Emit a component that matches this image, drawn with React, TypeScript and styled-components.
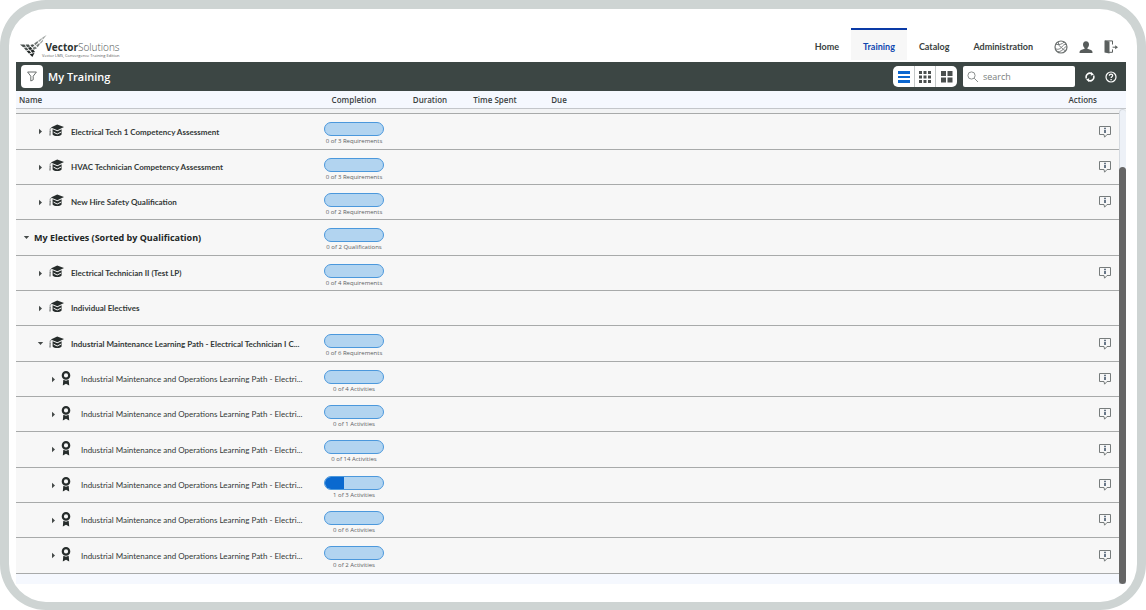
import React from "react";
import styled, { createGlobalStyle, css } from "styled-components";

const Global = createGlobalStyle`
  *, *::before, *::after { box-sizing: border-box; }
  body { margin: 0; background: #fff; color: #3a3f3e; font: 9px/12px "Open Sans", "Noto Sans", sans-serif; }
  button, input { font: inherit; color: inherit; margin: 0; padding: 0; border: 0; background: none; }
  button { cursor: pointer; }
  svg { display: block; flex-shrink: 0; }
`;

const Frame = styled.div`
  display: flex;
  flex-direction: column;
  min-height: 100vh;
  padding: 0 11px 0 7px;
  border: 9px solid #ced4d3;
  border-bottom-width: 8px;
  border-radius: 46px;
`;

const Header = styled.header`
  display: flex;
  justify-content: space-between;
  height: 53px;
  padding: 19px 8px 2px 4px;
`;

const Logo = styled.a`
  display: flex;
  align-items: flex-start;
  padding-top: 7px;
  color: #2c3331;
  text-decoration: none;
`;

const LogoText = styled.span`
  display: flex;
  flex-direction: column;
  align-items: flex-end;
  margin-left: -5px;
  padding-top: 5px;
`;

const Brand = styled.span`
  font: 700 10px/14px "Open Sans", sans-serif;
  span { font-weight: 300; color: #4c5250; }
`;

const Edition = styled.span`
  font-size: 4px;
  line-height: 4px;
  color: #555;
`;

const Nav = styled.nav`
  display: flex;
`;

const NavLink = styled.a<{ $active?: boolean }>`
  padding: 10px 12px 0;
  border-top: 2px solid transparent;
  font: 700 9px/14px Lato, "Open Sans", sans-serif;
  color: #3a3f3e;
  text-decoration: none;
  ${(p) => p.$active && css`
    border-top-color: #0a3aa6;
    background: #f7f7f7;
    color: #0f47b0;
  `}
`;

const NavIcons = styled.div`
  display: flex;
  gap: 11px;
  align-items: flex-start;
  padding: 12px 0 0 9px;
`;

const Toolbar = styled.div`
  display: flex;
  align-items: center;
  height: 29px;
  padding: 0 9px 0 5px;
  background: #3c4644;
`;

const FilterButton = styled.button`
  display: grid;
  place-items: center;
  width: 22px;
  height: 23px;
  border-radius: 4px;
  background: #fff;
`;

const Title = styled.h1`
  flex: 1;
  margin: 0 0 0 5px;
  font-size: 11px;
  line-height: 16px;
  font-weight: 600;
  color: #fff;
`;

const ViewSwitch = styled.div`
  display: flex;
  height: 21px;
  margin-right: 6px;
  border-radius: 5px;
  background: #fff;
`;

const ViewButton = styled.button`
  display: grid;
  place-items: center;
  width: 21px;
  color: #4a4f4e;
  & + & { border-left: 1px solid #c4c8c8; }
  &:last-child { width: 22px; }
  &[aria-pressed="true"] { color: #0b66cf; }
`;

const Search = styled.label`
  display: flex;
  align-items: center;
  gap: 4px;
  width: 112px;
  height: 21px;
  padding: 0 4px;
  border-radius: 2px;
  background: #fff;
  input { flex: 1; min-width: 0; outline: 0; }
  input::placeholder { color: #7b7f7e; opacity: 1; }
`;

const ToolButton = styled.button`
  display: grid;
  place-items: center;
  width: 12px;
  height: 20px;
  margin-left: 9px;
  color: #fff;
`;

const Panel = styled.main`
  position: relative;
  padding-bottom: 10px;
  background: #f5f8fe;
`;

const Table = styled.table`
  width: 100%;
  table-layout: fixed;
  border-collapse: separate;
  border-spacing: 0;
`;

const Head = styled.th<{ $w?: number; $align?: string }>`
  height: 18px;
  width: ${(p) => (p.$w ? p.$w + "px" : "auto")};
  padding: ${(p) => (p.$align === "right" ? "0 29px 0 0" : p.$align === "left" ? "0 3px" : "0")};
  border-bottom: 1px solid #c3c6ca;
  text-align: ${(p) => p.$align || "center"};
  font-size: 8px;
  line-height: 12px;
  font-weight: 600;
`;

const Lead = styled.td`
  height: 5px;
  padding: 0;
  background: #f2f3f4;
  border-bottom: 1px solid #a8aaaa;
`;

const Row = styled.tr`
  height: 35px;
  &:nth-child(3n + 2) { height: 36px; }
`;

const Cell = styled.td`
  padding: 0;
  background: #f7f7f7;
  border-bottom: 1px solid #a8aaaa;
`;

const nameFonts = [
  `700 9px/14px "Open Sans", sans-serif`,
  `700 8px/14px Lato, "Open Sans", sans-serif`,
  `400 8px/14px Lato, "Open Sans", sans-serif`,
];

const Name = styled.div<{ $level: number }>`
  display: flex;
  align-items: center;
  padding-left: ${(p) => [6, 20, 33][p.$level]}px;
  white-space: nowrap;
  font: ${(p) => nameFonts[p.$level]};
  color: ${(p) => (p.$level === 0 ? "#222726" : "#343938")};
`;

const Toggle = styled.button`
  display: grid;
  place-items: center;
  flex-shrink: 0;
  width: 8px;
  height: 12px;
  color: #454a49;
`;

const TypeIcon = styled.span<{ $level: number }>`
  flex-shrink: 0;
  width: ${(p) => (p.$level === 1 ? 15 : 10)}px;
  padding-bottom: 3px;
  margin: ${(p) => (p.$level === 1 ? "0 7px 0 5px" : "0 10px 0 4px")};
  color: #262c2b;
`;

const Label = styled.span<{ $level: number }>`
  padding-left: ${(p) => (p.$level === 0 ? 4 : 0)}px;
`;

const ProgressCell = styled(Cell)`
  padding-top: 8px;
  vertical-align: top;
`;

const Progress = styled.div`
  display: flex;
  flex-direction: column;
  align-items: center;
  font-size: 6px;
  line-height: 8px;
  color: #5b605f;
`;

const Track = styled.div`
  width: 60px;
  height: 14px;
  margin-bottom: 1px;
  overflow: hidden;
  border: 1px solid #4b98dc;
  border-radius: 7px;
  background: #b2d4f0;
`;

const Fill = styled.div`
  height: 100%;
  background: #0a69cf;
`;

const InfoCell = styled(Cell)`
  padding-right: 15px;
  button { display: block; margin-left: auto; }
`;

const Scrollbar = styled.div`
  position: absolute;
  top: 18px;
  right: 0;
  bottom: 0;
  width: 7px;
  padding-top: 57px;
  border: 1px solid #d5dae0;
  border-width: 1px 0 0 1px;
  border-radius: 4px 4px 0 0;
  background: #edf1f7;
`;

const Thumb = styled.div`
  height: 100%;
  margin-left: -1px;
  border-radius: 4px;
  background: #666;
`;

const Cap = () => (
  <svg width="15" height="13" viewBox="0 0 15 13" fill="currentColor">
    <path d="M8.2 0.4 15 3.1 8.4 6.2 1.8 3.6Z" />
    <path d="M3.6 5.2 8.4 7.2 12.6 5.3V10.4C10.6 12.6 5.6 12.6 3.6 10.4Z" />
    <path d="M4.6 8.2 8.2 10 12.2 8" fill="none" stroke="#f7f7f7" strokeWidth="1" />
    <path d="M2.6 4 1.1 4.8V7.6" fill="none" stroke="#7d8281" strokeWidth="0.8" />
    <path d="M0.7 7H1.7V11.6H0.3Z" opacity="0.6" />
  </svg>
);

const Ribbon = () => (
  <svg width="10" height="16" viewBox="0 0 10 16">
    <circle cx="5" cy="5.4" r="3.2" fill="none" stroke="currentColor" strokeWidth="2.2" />
    <path d="M2.3 9.8 5 10.8 7.7 9.8 8.2 15.4 5 13.8 1.8 15.4Z" fill="currentColor" />
  </svg>
);

const Info = () => (
  <svg width="12" height="12" viewBox="0 0 12 12" fill="none" stroke="#777c7c">
    <path d="M0.5 0.5H11.5V8.5H8L5.6 11.2 5 8.5H0.5Z" />
    <path d="M6 3.8V7" stroke="#2b4058" strokeWidth="1.4" />
    <path d="M5.3 2.3H6.7" stroke="#2b4058" strokeWidth="1.2" />
  </svg>
);

const Arrow = ({ open }: { open?: boolean }) => (
  <svg width="7" height="7" viewBox="0 0 7 7" fill="currentColor">
    <path d={open ? "M0.8 2H6.2L3.5 5Z" : "M2 0.8V6.2L5 3.5Z"} />
  </svg>
);

const LogoMark = () => (
  <svg width="27" height="23" viewBox="0 0 27 23">
    <g fill="#4b5250">
      <path d="M0 9.6 4.4 9.4 6 11.6 3.2 12.2Z" />
      <path d="M5.6 9.6 8.8 9.6 10.2 11.4 7.2 12.2Z" />
      <path d="M3.8 12.8 6.6 12.4 8.4 14.8 6 15.4Z" />
      <path d="M10.4 10 13 9.2 14.4 10.8 12 12.2Z" />
    </g>
    <g fill="#202625">
      <path d="M7.8 12.8 10.8 12 12.4 14.2 9.8 15Z" />
      <path d="M6.6 16 9.2 15.4 11.2 18 8.8 18.4Z" />
      <path d="M10.4 15.6 13.2 14.6 15 17 12.2 17.8Z" />
      <path d="M9.6 19.2 12.6 18.4 14.6 17.8 12.4 22Z" />
    </g>
    <g fill="#747a78">
      <path d="M12.6 12.8 15.2 11.4 17 13.2 13.8 14.8Z" />
      <path d="M14.2 8.4 17.6 6 18 7.8 15.2 10.2Z" />
      <path d="M16.2 10.6 19.4 8 19.6 9.8 17.6 12.2Z" />
    </g>
    <g fill="#a0a5a3">
      <path d="M18.4 5.4 21.8 3 21.6 4.8 18.8 7.2Z" />
      <path d="M20.2 7.2 23.2 4.4 22.8 6.4 20.4 9Z" />
      <path d="M22.4 2.6 26.6 0 23.6 3.8 22.4 4.4Z" />
    </g>
  </svg>
);

const Globe = () => (
  <svg width="14" height="14" viewBox="0 0 14 14" fill="none" stroke="#6c7170">
    <circle cx="7" cy="7" r="6" strokeWidth="1.2" />
    <path d="M2 4.2C4.5 5.4 8.5 4 10.2 2M1.2 8C3 10.4 6 9 7.4 7.4S10.4 3.6 12.4 4.6M3.6 11.8C6 12 9 10 10 8.4S12 6.6 12.8 7M4.4 2.2C4.2 4.8 6 7 7.4 7.6M7.4 7.6C8.6 9 9.8 10 11.4 10.8" strokeWidth="0.9" />
  </svg>
);

const Person = () => (
  <svg width="14" height="14" viewBox="0 0 14 14" fill="#575c5b">
    <path d="M7 1.2C9 1.2 10 2.5 10 4.4 10 6.2 9 7.6 8.4 8V8.8L12 10C13 10.4 13.5 11.2 13.5 13H0.5C0.5 11.2 1 10.4 2 10L5.6 8.8V8C5 7.6 4 6.2 4 4.4 4 2.5 5 1.2 7 1.2Z" />
  </svg>
);

const Exit = () => (
  <svg width="14" height="14" viewBox="0 0 14 14">
    <path d="M0.5 0.5 5.5 1.6V13.6L0.5 12.4Z" fill="#5b605f" />
    <path d="M1 0.9H8.5V4.5M8.5 9.4V12.3H5" fill="none" stroke="#5b605f" />
    <path d="M8.6 7.2H11.8" stroke="#5b605f" />
    <path d="M11.2 5.2 14 7.2 11.2 9.2Z" fill="#5b605f" />
  </svg>
);

const Grid = ({ n, size, step }: { n: number; size: number; step: number }) => (
  <svg width="12" height="12" viewBox="0 0 12 12" fill="currentColor">
    {Array.from({ length: n * n }, (_, i) => (
      <rect key={i} x={(i % n) * step} y={Math.floor(i / n) * step} width={size} height={size} />
    ))}
  </svg>
);

type Item = { level: number; name: string; open?: boolean; done?: number; total?: number; unit?: string };

const path = "Industrial Maintenance and Operations Learning Path - Electri...";

const items: Item[] = [
  { level: 1, name: "Electrical Tech 1 Competency Assessment", total: 3 },
  { level: 1, name: "HVAC Technician Competency Assessment", total: 3 },
  { level: 1, name: "New Hire Safety Qualification", total: 2 },
  { level: 0, name: "My Electives (Sorted by Qualification)", total: 2, unit: "Qualifications", open: true },
  { level: 1, name: "Electrical Technician II (Test LP)", total: 4 },
  { level: 1, name: "Individual Electives" },
  { level: 1, name: "Industrial Maintenance Learning Path - Electrical Technician I C...", total: 6, open: true },
  { level: 2, name: path, total: 4, unit: "Activities" },
  { level: 2, name: path, total: 1, unit: "Activities" },
  { level: 2, name: path, total: 14, unit: "Activities" },
  { level: 2, name: path, total: 3, unit: "Activities", done: 1 },
  { level: 2, name: path, total: 6, unit: "Activities" },
  { level: 2, name: path, total: 2, unit: "Activities" },
];

export default function App() {
  return (
    <Frame>
      <Global />
      <Header>
        <Logo href="#">
          <LogoMark />
          <LogoText>
            <Brand>Vector<span>Solutions</span></Brand>
            <Edition>Vector LMS, Convergence Training Edition</Edition>
          </LogoText>
        </Logo>
        <Nav>
          <NavLink href="#">Home</NavLink>
          <NavLink href="#" $active aria-current="page">Training</NavLink>
          <NavLink href="#">Catalog</NavLink>
          <NavLink href="#">Administration</NavLink>
          <NavIcons>
            <button aria-label="Language"><Globe /></button>
            <button aria-label="Profile"><Person /></button>
            <button aria-label="Log out"><Exit /></button>
          </NavIcons>
        </Nav>
      </Header>
      <Toolbar>
        <FilterButton aria-label="Filter">
          <svg width="10" height="11" viewBox="0 0 10 11" fill="none" stroke="#6a6f6e">
            <path d="M0.6 1H9.4L6.2 5.2V8.8L3.8 10V5.2Z" />
          </svg>
        </FilterButton>
        <Title>My Training</Title>
        <ViewSwitch>
          <ViewButton aria-label="List view" aria-pressed="true">
            <svg width="12" height="12" viewBox="0 0 12 12" fill="currentColor">
              <path d="M0 0H12V3H0ZM0 5H12V7H0ZM0 9H12V12H0Z" />
            </svg>
          </ViewButton>
          <ViewButton aria-label="Small tiles" aria-pressed="false"><Grid n={3} size={3} step={4.5} /></ViewButton>
          <ViewButton aria-label="Large tiles" aria-pressed="false"><Grid n={2} size={5} step={6.5} /></ViewButton>
        </ViewSwitch>
        <Search>
          <svg width="12" height="12" viewBox="0 0 12 12" fill="none" stroke="#8a8f8e">
            <circle cx="4.5" cy="4.5" r="3.6" />
            <path d="M7.2 7.2 11 11" />
          </svg>
          <input type="text" placeholder="search" aria-label="Search" />
        </Search>
        <ToolButton aria-label="Refresh">
          <svg width="10" height="10" viewBox="0 0 10 10" fill="none" stroke="currentColor" strokeWidth="1.5">
            <path d="M1.4 6.4A3.8 3.8 0 0 1 6.8 1.7M8.6 3.6A3.8 3.8 0 0 1 3.2 8.3" />
            <path d="M6 0 9 2.6 5.8 3.8ZM4 10 1 7.4 4.2 6.2Z" fill="currentColor" stroke="none" />
          </svg>
        </ToolButton>
        <ToolButton aria-label="Help">
          <svg width="12" height="12" viewBox="0 0 12 12" fill="none" stroke="currentColor">
            <circle cx="6" cy="6" r="5" strokeWidth="1.2" />
            <path d="M4.4 4.8C4.4 2.6 7.8 2.8 7.6 4.7 7.5 5.7 6.1 5.7 6.1 7M6.1 8V9.2" strokeWidth="1.3" />
          </svg>
        </ToolButton>
      </Toolbar>
      <Panel>
        <Table>
          <thead>
            <tr>
              <Head $w={298} $align="left">Name</Head>
              <Head $w={80}>Completion</Head>
              <Head $w={72}>Duration</Head>
              <Head $w={58}>Time Spent</Head>
              <Head $w={70}>Due</Head>
              <Head $align="right">Actions</Head>
            </tr>
          </thead>
          <tbody>
            <tr><Lead colSpan={6} /></tr>
            {items.map((it, i) => (
              <Row key={i}>
                <Cell>
                  <Name $level={it.level}>
                    <Toggle aria-label="Toggle" aria-expanded={!!it.open}><Arrow open={it.open} /></Toggle>
                    {it.level > 0 && <TypeIcon $level={it.level}>{it.level === 1 ? <Cap /> : <Ribbon />}</TypeIcon>}
                    <Label $level={it.level}>{it.name}</Label>
                  </Name>
                </Cell>
                <ProgressCell>
                  {it.total && (
                    <Progress>
                      <Track>
                        {!!it.done && <Fill style={{ width: `${(it.done / it.total) * 100}%` }} />}
                      </Track>
                      {`${it.done || 0} of ${it.total} ${it.unit || "Requirements"}`}
                    </Progress>
                  )}
                </ProgressCell>
                <Cell /><Cell /><Cell />
                <InfoCell>
                  {it.total && it.level > 0 && <button aria-label="Details"><Info /></button>}
                </InfoCell>
              </Row>
            ))}
          </tbody>
        </Table>
        <Scrollbar><Thumb /></Scrollbar>
      </Panel>
    </Frame>
  );
}
